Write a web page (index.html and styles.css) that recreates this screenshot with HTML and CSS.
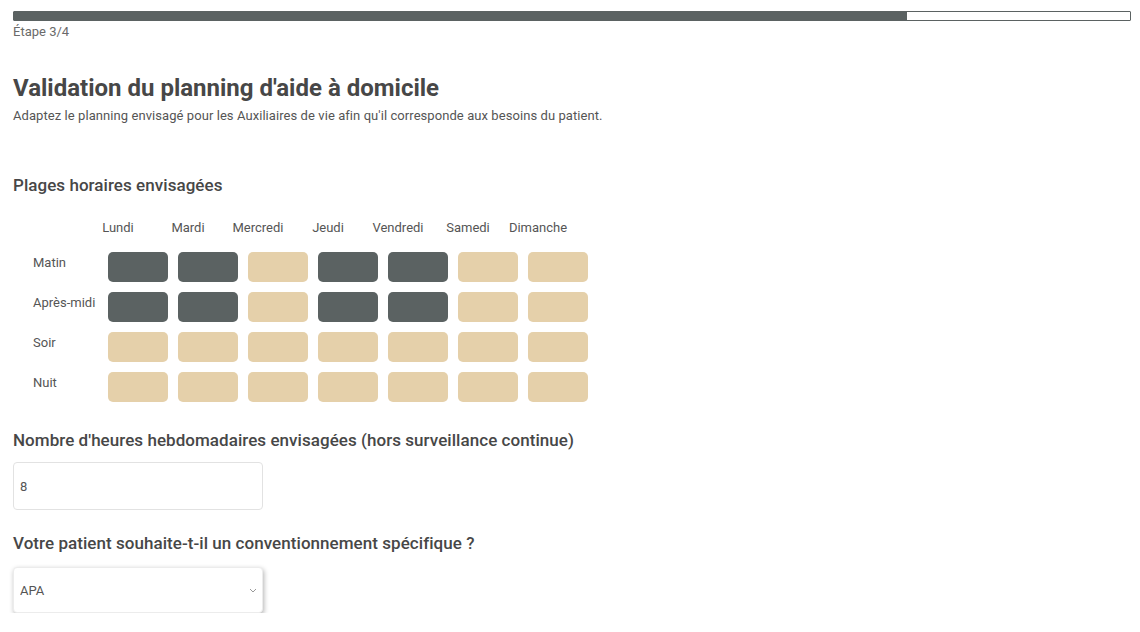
FILE: index.html
```html
<!DOCTYPE html>
<html>
  <head>
    <meta charset="utf-8">
    <title>Validation du planning</title>
    <link rel="stylesheet" href="styles.css">
  </head>
  <body>
    <section class="wizard">
      <div class="progress"><div class="progress-fill" style="width: 80%"></div></div>
      <p class="step">Étape 3/4</p>

      <h1>Validation du planning d'aide à domicile</h1>
      <p class="intro">Adaptez le planning envisagé pour les Auxiliaires de vie afin qu'il corresponde aux besoins du patient.</p>

      <h2 class="section-title">Plages horaires envisagées</h2>
      <div class="planning">
        <ul class="days">
          <li>Lundi</li>
          <li>Mardi</li>
          <li>Mercredi</li>
          <li>Jeudi</li>
          <li>Vendredi</li>
          <li>Samedi</li>
          <li>Dimanche</li>
        </ul>
        <div class="slots">
          <span class="slot-label">Matin</span>
          <span class="slot on"></span><span class="slot on"></span><span class="slot"></span><span class="slot on"></span><span class="slot on"></span><span class="slot"></span><span class="slot"></span>
          <span class="slot-label">Après-midi</span>
          <span class="slot on"></span><span class="slot on"></span><span class="slot"></span><span class="slot on"></span><span class="slot on"></span><span class="slot"></span><span class="slot"></span>
          <span class="slot-label">Soir</span>
          <span class="slot"></span><span class="slot"></span><span class="slot"></span><span class="slot"></span><span class="slot"></span><span class="slot"></span><span class="slot"></span>
          <span class="slot-label">Nuit</span>
          <span class="slot"></span><span class="slot"></span><span class="slot"></span><span class="slot"></span><span class="slot"></span><span class="slot"></span><span class="slot"></span>
        </div>
      </div>

      <h2 class="field-title hours-title">Nombre d'heures hebdomadaires envisagées (hors surveillance continue)</h2>
      <input class="field hours" type="text" value="8">

      <h2 class="field-title convention-title">Votre patient souhaite-t-il un conventionnement spécifique ?</h2>
      <div class="select-wrap">
        <select class="field convention">
          <option>APA</option>
          <option>Aucun</option>
        </select>
        <svg class="chevron" width="8" height="5" viewBox="0 0 8 5"><path d="M1 1l3 3 3-3" fill="none" stroke="#999" stroke-width="1"/></svg>
      </div>
    </section>
  </body>
</html>
```

FILE: styles.css
```css
html {
  background: #fff;
  color: #555;
}
html, input, select {
  font-family: Roboto, "Open Sans", sans-serif;
}
body {
  margin: 0;
}
h1, h2, p, ul {
  margin: 0;
}

.wizard {
  padding: 11px 9px 0 13px;
}

/* progress bar */
.progress {
  height: 10px;
  box-sizing: border-box;
  border: 1px solid #5b6262;
  border-radius: 1px;
  background: #fff;
}
.progress-fill {
  height: 100%;
  background: #5b6262;
}
.step {
  margin-top: 3px;
  font-size: 13px;
  line-height: 16px;
  color: #6a6a6a;
}

/* headings */
h1 {
  margin-top: 33px;
  font-size: 24px;
  line-height: 30px;
  font-weight: 700;
  color: #474747;
}
.intro {
  margin-top: 5px;
  font-size: 13px;
  line-height: 16px;
  letter-spacing: 0.07px;
  color: #555;
}
.section-title, .field-title {
  font-size: 17px;
  line-height: 20px;
  font-weight: 500;
  letter-spacing: 0.05px;
  color: #474747;
}
.section-title {
  margin-top: 51px;
}

/* planning grid */
.days {
  display: flex;
  gap: 10px;
  margin: 24px 0 0 75px;
  padding: 0;
  list-style: none;
}
.days li {
  width: 60px;
  font-size: 13px;
  line-height: 17px;
  text-align: center;
  color: #555;
}
.slots {
  display: grid;
  grid-template-columns: 65px repeat(7, 60px);
  grid-auto-rows: 30px;
  column-gap: 10px;
  row-gap: 10px;
  margin: 16px 0 0 20px;
}
.slot-label {
  font-size: 13px;
  line-height: 21px;
  color: #555;
}
.slot {
  border-radius: 5px;
  background: #e5d0aa;
}
.slot.on {
  background: #5b6262;
}

/* form fields */
.hours-title {
  margin-top: 28px;
}
.convention-title {
  margin-top: 23px;
}
.field {
  display: block;
  box-sizing: border-box;
  width: 250px;
  padding: 0 6px;
  font-size: 13px;
  color: #555;
  background: #fff;
  border: 1px solid #e2e2e2;
  border-radius: 4px;
  outline: none;
}
.hours {
  margin-top: 12px;
  height: 48px;
}
.select-wrap {
  position: relative;
  width: 250px;
  margin-top: 14px;
}
.convention {
  height: 46px;
  -webkit-appearance: none;
  appearance: none;
  border-color: #ececec;
  box-shadow: 1px 2px 5px rgba(0, 0, 0, 0.3);
}
.chevron {
  position: absolute;
  right: 6px;
  top: 21px;
}
```
